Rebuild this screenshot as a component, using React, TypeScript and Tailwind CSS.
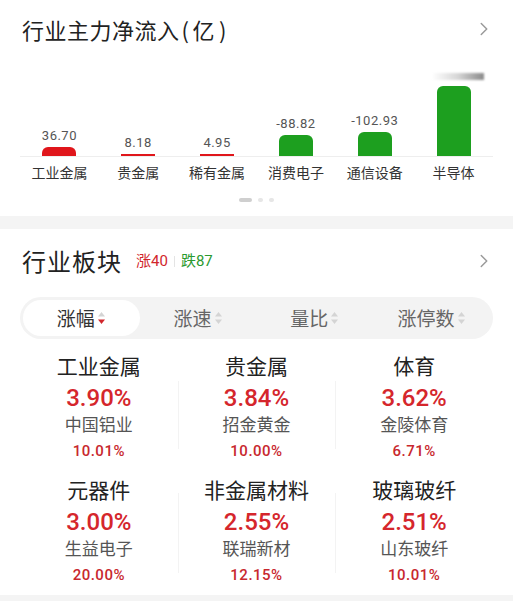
import { ChevronRight } from "lucide-react";

const cn = { fontFamily: '"Noto Sans CJK SC", "Noto Sans", sans-serif' };
const num = { fontFamily: 'Roboto, "Noto Sans CJK SC", sans-serif' };

const flows = [
  { name: "工业金属", value: "36.70", h: 9, up: true },
  { name: "贵金属", value: "8.18", h: 2, up: true },
  { name: "稀有金属", value: "4.95", h: 2, up: true },
  { name: "消费电子", value: "-88.82", h: 21, up: false },
  { name: "通信设备", value: "-102.93", h: 24, up: false },
  { name: "半导体", value: "", h: 70, up: false },
];

const tabs = ["涨幅", "涨速", "量比", "涨停数"];

const sectors = [
  { name: "工业金属", pct: "3.90%", stock: "中国铝业", stockPct: "10.01%" },
  { name: "贵金属", pct: "3.84%", stock: "招金黄金", stockPct: "10.00%" },
  { name: "体育", pct: "3.62%", stock: "金陵体育", stockPct: "6.71%" },
  { name: "元器件", pct: "3.00%", stock: "生益电子", stockPct: "20.00%" },
  { name: "非金属材料", pct: "2.55%", stock: "联瑞新材", stockPct: "12.15%" },
  { name: "玻璃玻纤", pct: "2.51%", stock: "山东玻纤", stockPct: "10.01%" },
];

const SortArrows = ({ active }: { active?: boolean }) => (
  <svg width="9" height="14" viewBox="0 0 9 14" className="ml-[2px]">
    <path d="M4.5 1 L8 5.5 L1 5.5 Z" fill="#d4d4d4" />
    <path d="M4.5 13 L8 8.5 L1 8.5 Z" fill={active ? "#d1262c" : "#d4d4d4"} />
  </svg>
);

const App = () => {
  return (
    <div className="w-[513px] h-[602px] bg-white overflow-hidden" style={cn}>
      {/* 资金流向 */}
      <section className="px-5 pt-[14px]">
        <div className="flex items-center justify-between pl-[2px]">
          <h2 className="text-[22px] leading-[30px] text-[#222] tracking-[0.5px]">
            行业主力净流入<span className="pl-[2px] pr-[3px]">(</span>亿<span className="pl-[4px]">)</span>
          </h2>
          <ChevronRight className="w-[22px] h-[22px] text-[#9a9a9a] -mr-[2px]" strokeWidth={1.6} />
        </div>

        <div className="mt-[21px] h-[92px] grid grid-cols-6 items-end border-b border-[#eeeeee]">
          {flows.map((f) => (
            <div key={f.name} className="flex flex-col items-center justify-end">
              {f.value ? (
                <span className="text-[13px] leading-4 text-[#555] mb-[3px] tracking-[0.5px]" style={num}>
                  {f.value}
                </span>
              ) : (
                <span className="mb-[6px] ml-[8px] block w-[52px] h-[7px] bg-gradient-to-r from-white via-[#d6d6d6] to-[#8a8a8a] blur-[1px]" />
              )}
              <div
                className={`w-[34px] ${f.h > 4 ? "rounded-t-[6px]" : ""} ${f.up ? "bg-[#e0161b]" : "bg-[#1d9f1f]"}`}
                style={{ height: f.h }}
              />
            </div>
          ))}
        </div>
        <div className="grid grid-cols-6 pt-[5px]">
          {flows.map((f) => (
            <span key={f.name} className="text-center text-[14px] leading-5 text-[#333]">
              {f.name}
            </span>
          ))}
        </div>
        <div className="flex justify-center items-center gap-[6px] pt-[16px] pb-[14px]">
          <span className="w-[13px] h-[4px] rounded-full bg-[#cfcfcf]" />
          <span className="w-[5px] h-[4px] rounded-full bg-[#e6e6e6]" />
          <span className="w-[5px] h-[4px] rounded-full bg-[#e6e6e6]" />
        </div>
      </section>

      <div className="h-[13px] bg-[#f4f4f4]" />

      {/* 行业板块 */}
      <section className="px-5 pt-[16px]">
        <div className="flex items-center justify-between pl-[2px]">
          <div className="flex items-center">
            <h2 className="text-[24px] leading-[32px] text-[#222] tracking-[1px]">行业板块</h2>
            <span className="ml-[14px] text-[15px] text-[#d1262c]" style={num}>涨40</span>
            <span className="mx-[6px] w-px h-[11px] bg-[#e4e4e4]" />
            <span className="text-[15px] text-[#2b9a30]" style={num}>跌87</span>
          </div>
          <ChevronRight className="w-[22px] h-[22px] text-[#9a9a9a] -mr-[2px]" strokeWidth={1.6} />
        </div>

        <div className="mt-[20px] h-[42px] rounded-full bg-[#f3f3f3] p-[3px] grid grid-cols-4">
          {tabs.map((t, i) => (
            <div
              key={t}
              className={`flex items-center justify-center rounded-full text-[19px] ${
                i === 0 ? "bg-white text-[#333]" : "text-[#666]"
              }`}
            >
              {t}
              <SortArrows active={i === 0} />
            </div>
          ))}
        </div>

        <div className="grid grid-cols-3 pt-[12px]">
          {sectors.map((s, i) => (
            <div key={s.name} className={`relative flex flex-col items-center ${i >= 3 ? "pt-[12px]" : ""}`}>
              {i % 3 !== 0 && (
                <span className="absolute left-0 top-[30px] bottom-[14px] w-px bg-[#f3f3f3]" />
              )}
              <span className="text-[21px] leading-[28px] text-[#222]">{s.name}</span>
              <span className="text-[24px] leading-[24px] font-medium text-[#d5262c] mt-[7px]" style={num}>
                {s.pct}
              </span>
              <span className="text-[17px] leading-[24px] text-[#555] mt-[2px]">{s.stock}</span>
              <span className="text-[15px] leading-[24px] font-medium text-[#c8282e] tracking-[0.5px] mt-[3px]" style={num}>
                {s.stockPct}
              </span>
            </div>
          ))}
        </div>
      </section>
      <div className="h-[6px] bg-[#f4f4f4] mt-[8px]" />
    </div>
  );
};

export default App;
